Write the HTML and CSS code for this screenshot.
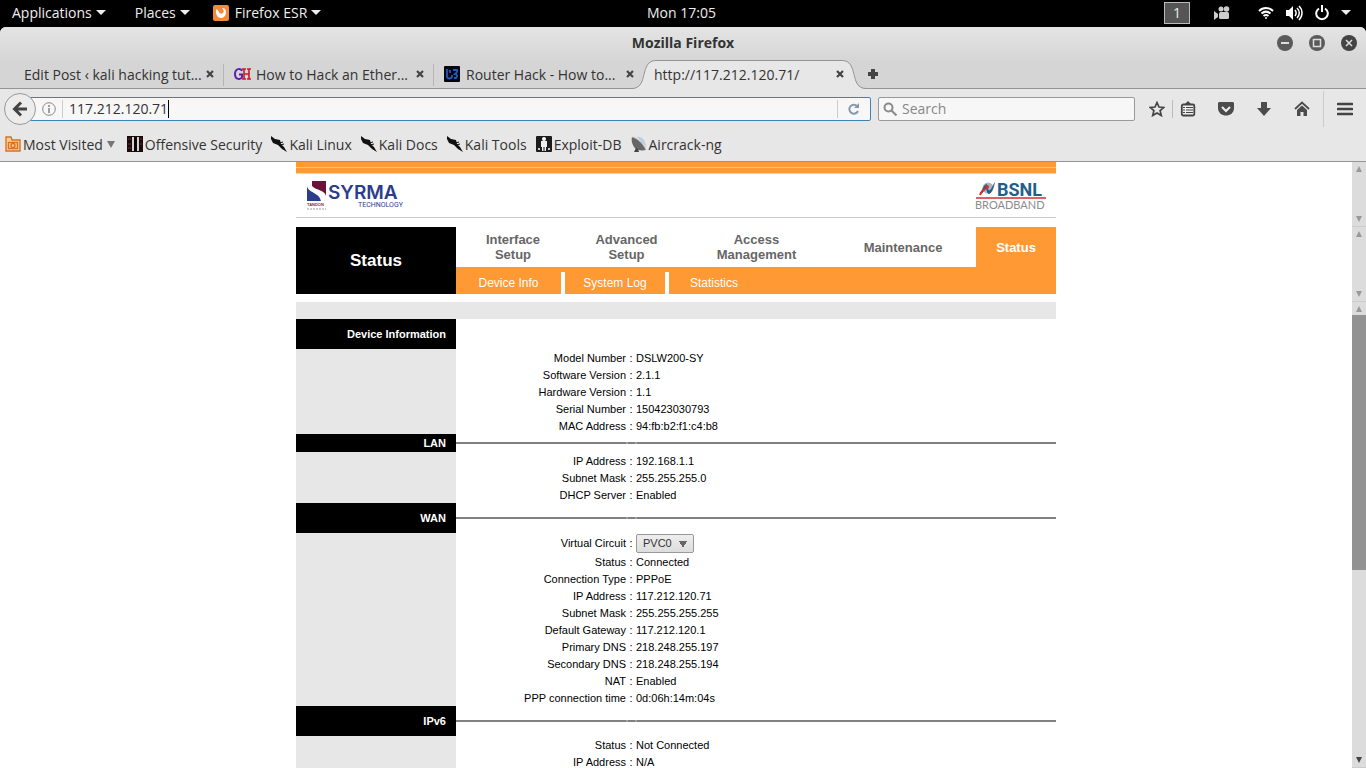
FILE: index.html
```html
<!DOCTYPE html>
<html lang="en">
<head>
    <meta charset="UTF-8">
    <title>Mozilla Firefox</title>
    <link rel="stylesheet" href="styles.css">
</head>
<body>
    <!-- desktop panel -->
    <header class="panel">
        <div class="panel-left">
            <button class="panel-item">Applications <i class="caret"></i></button>
            <button class="panel-item">Places <i class="caret"></i></button>
            <button class="panel-item">
                <svg class="fx-icon" width="16" height="16" viewBox="0 0 16 16"><rect width="16" height="16" rx="2" fill="#f08a3c"/><path d="M3.500 4C2 8 4 13 8 13s6.500-5 4-9c-1-1-2-1-3-.500 1.500 1 2 2.500 1.500 4C9 9 7 9 6 7.500 5.500 6 5 5 3.500 4z" fill="#fff"/></svg>
                Firefox ESR <i class="caret"></i>
            </button>
        </div>
        <button class="panel-item clock">Mon 17:05</button>
        <div class="panel-right">
            <button class="workspace">1</button>
            <svg class="cam" width="16" height="14" viewBox="0 0 16 14" fill="#ccc"><circle cx="7" cy="3" r="2.500"/><circle cx="12.500" cy="3" r="2.800"/><rect x="5" y="6" width="10" height="7" rx="1.500"/><path d="M0 5l4 3v3l-4 3z"/></svg>
            <svg width="16" height="14" viewBox="0 0 16 14" fill="none" stroke="#fff" stroke-width="2"><path d="M1 5c4-4 10-4 14 0"/><path d="M3.500 7.500c3-2.500 6-2.500 9 0"/><path d="M5.500 10c2-1.500 3-1.500 5 0"/><circle cx="8" cy="12" r="1" fill="#fff" stroke="none"/></svg>
            <svg width="17" height="16" viewBox="0 0 17 16" fill="none" stroke="#fff"><path d="M0 5h3l4-4v14l-4-4H0z" fill="#fff" stroke="none"/><path d="M9 5c1.500 2 1.500 4 0 6M11 3c3 3 3 7 0 10M13 1c4 4 4 10 0 14" stroke-width="1.500"/></svg>
            <svg width="14" height="16" viewBox="0 0 14 16" fill="none" stroke="#fff" stroke-width="2"><path d="M4 3.500a5.800 5.800 0 1 0 6 0M7 0v7"/></svg>
            <i class="caret"></i>
        </div>
    </header>

    <div class="window">
        <div class="titlebar">
            <div class="title">Mozilla Firefox</div>
            <div class="win-buttons">
                <button aria-label="Minimize"><svg width="16" height="16" viewBox="0 0 16 16"><circle cx="8" cy="8" r="8" fill="#5a5a5a"/><path d="M4 8h8" stroke="#ddd" stroke-width="2"/></svg></button>
                <button aria-label="Maximize"><svg width="16" height="16" viewBox="0 0 16 16"><circle cx="8" cy="8" r="8" fill="#5a5a5a"/><rect x="4.500" y="4.500" width="7" height="7" fill="none" stroke="#ddd" stroke-width="1.500"/></svg></button>
                <button aria-label="Close"><svg width="16" height="16" viewBox="0 0 16 16"><circle cx="8" cy="8" r="8" fill="#444"/><path d="M5 5l6 6M11 5l-6 6" stroke="#ddd" stroke-width="1.500"/></svg></button>
            </div>
        </div>

        <div class="tabs">
            <div class="tab">
                <button class="tab-label">Edit Post ‹ kali hacking tut...</button>
                <button class="tab-close" aria-label="Close tab"><svg width="8" height="8" viewBox="0 0 8 8"><path d="M1 1l6 6M7 1L1 7" stroke="#444" stroke-width="2.200"/></svg></button>
            </div>
            <div class="tab">
                <svg width="17" height="16" viewBox="0 0 17 16" fill="none" stroke-width="2"><path d="M8 5C7 2 1 2 1 8s6 6 7 3V8.500H5" stroke="#5a20b0"/><path d="M10 3v10M15 3v10M10 8h5M8 3h4M13 3h4M8 13h4M13 13h4" stroke="#d01828" stroke-width="1.600"/></svg>
                <button class="tab-label">How to Hack an Ether...</button>
                <button class="tab-close" aria-label="Close tab"><svg width="8" height="8" viewBox="0 0 8 8"><path d="M1 1l6 6M7 1L1 7" stroke="#444" stroke-width="2.200"/></svg></button>
            </div>
            <div class="tab">
                <svg width="17" height="16" viewBox="0 0 17 16"><rect width="16" height="16" rx="1" fill="#05060c"/><path d="M3 3v8c1 2 4 2 5 0V9M6 4v3M9 4h4c1 2-1 3-2 4 2 0 3 2 1 4h-2" fill="none" stroke="#1c5cc0" stroke-width="1.800"/></svg>
                <button class="tab-label">Router Hack - How to...</button>
                <button class="tab-close" aria-label="Close tab"><svg width="8" height="8" viewBox="0 0 8 8"><path d="M1 1l6 6M7 1L1 7" stroke="#444" stroke-width="2.200"/></svg></button>
            </div>
            <div class="tab active">
                <svg class="edge edge-left" width="24" height="29" viewBox="0 0 24 29"><path d="M0 28.500C17 28.500 7 .5 24 .5V29H0z" fill="#e7e7e7"/><path d="M0 28.500C17 28.500 7 .5 24 .5" fill="none" stroke="#949494"/></svg>
                <svg class="edge edge-right" width="24" height="29" viewBox="0 0 24 29"><path d="M24 28.500C7 28.500 17 .5 0 .5V29h24z" fill="#e7e7e7"/><path d="M24 28.500C7 28.500 17 .5 0 .5" fill="none" stroke="#949494"/></svg>
                <button class="tab-label">http://117.212.120.71/</button>
                <button class="tab-close" aria-label="Close tab"><svg width="8" height="8" viewBox="0 0 8 8"><path d="M1 1l6 6M7 1L1 7" stroke="#444" stroke-width="2.200"/></svg></button>
            </div>
            <button class="new-tab" aria-label="New tab"><svg width="10" height="10" viewBox="0 0 10 10"><path d="M5 0v10M0 5h10" stroke="#444" stroke-width="4"/></svg></button>
        </div>

        <div class="navbar">
            <button class="back" aria-label="Back"><svg width="16" height="16" viewBox="0 0 16 16" fill="none" stroke="#444" stroke-width="3"><path d="M9 1.500L2.500 8 9 14.500M3 8h12"/></svg></button>
            <div class="urlbar">
                <svg width="14" height="14" viewBox="0 0 14 14" fill="none" stroke="#888"><circle cx="7" cy="7" r="6.300"/><path d="M7 6v5M7 3v2" stroke-width="1.600"/></svg>
                <input class="url" type="text" aria-label="Address" value="117.212.120.71">
                <i class="text-cursor"></i>
                <button class="reload" aria-label="Reload"><svg width="12" height="12" viewBox="0 0 12 12" fill="none" stroke="#8599a8" stroke-width="2"><path d="M9.500 3.500A4.500 4.500 0 1 0 10 8"/><path d="M11 0v5H6z" fill="#8599a8" stroke="none"/></svg></button>
            </div>
            <div class="searchbar">
                <svg width="14" height="14" viewBox="0 0 14 14" fill="none" stroke="#8a8a8a" stroke-width="2"><circle cx="5.500" cy="5.500" r="4"/><path d="M8.500 8.500l5 5"/></svg>
                <input type="text" aria-label="Search" placeholder="Search">
            </div>
            <div class="tools">
                <button aria-label="Bookmark"><svg width="16" height="16" viewBox="0 0 16 16"><path d="M8 1.500l2 4.500 4.800.4-3.700 3.200 1.200 4.900L8 12l-4.300 2.500 1.200-4.900L1.200 6.400 6 6z" fill="none" stroke="#444" stroke-width="1.700"/></svg></button>
                <i class="divider"></i>
                <button aria-label="Bookmarks list"><svg width="16" height="16" viewBox="0 0 16 16"><path d="M5 3l3-3 3 3" fill="#444"/><rect x="1.800" y="3.500" width="12.500" height="11" rx="1.500" fill="#eee" stroke="#444" stroke-width="1.800"/><path d="M3 6.500h2M6 6.500h7M3 9h2M6 9h7M3 11.500h2M6 11.500h7" stroke="#444" stroke-width="1.200"/></svg></button>
                <button aria-label="Pocket"><svg width="16" height="16" viewBox="0 0 16 16"><path d="M1 1h14l1 1v5c0 10-16 10-16 0V2z" fill="#4c4c4c"/><path d="M4 6l4 4 4-4" fill="none" stroke="#eee" stroke-width="2"/></svg></button>
                <button aria-label="Downloads"><svg width="16" height="16" viewBox="0 0 16 16"><path d="M5 1h6v6h4l-7 8-7-8h4z" fill="#4c4c4c"/></svg></button>
                <button aria-label="Home"><svg width="16" height="16" viewBox="0 0 16 16"><path d="M1 8l7-6.500L15 8" fill="none" stroke="#4c4c4c" stroke-width="1.800"/><path d="M8 4.500l5 4.500v6H9.500v-4h-3v4H3V9z" fill="#4c4c4c"/></svg></button>
                <i class="divider long"></i>
                <button aria-label="Menu"><svg width="16" height="16" viewBox="0 0 16 16"><path d="M1 3h14M1 8h14M1 13h14" stroke="#444" stroke-width="2.600" stroke-linecap="round"/></svg></button>
            </div>
        </div>

        <nav class="bookmarks">
            <a href="#"><svg width="16" height="16" viewBox="0 0 16 16" fill="none" stroke="#d87420" stroke-width="1.400"><path d="M1 15V1h5l1 3h8v11z" fill="#f8cf9c"/><rect x="3.500" y="6.500" width="9" height="6"/><circle cx="8" cy="9.500" r="2"/></svg>Most Visited<i class="small-caret"></i></a>
            <a href="#"><svg width="16" height="16" viewBox="0 0 16 16"><rect width="16" height="16" fill="#1a0c0c"/><path d="M5 1h2v14H5zM10 1h2v14h-2z" fill="#d8d0d0"/><path d="M7.500 4l1-2 1 2v11h-2z" fill="#000"/><path d="M1 3h3M1 8h3M13 3h2M13 8h2M1 12h3" stroke="#6a3030"/></svg>Offensive Security</a>
            <a href="#"><svg width="16" height="16" viewBox="0 0 16 16"><path d="M0 0l4 3 5 1 1 4 3 3 3 5-5-3-4-4-5-2-2-4z" fill="#111"/><path d="M8 7l4-1M9 9l4-1" stroke="#111"/></svg>Kali Linux</a>
            <a href="#"><svg width="16" height="16" viewBox="0 0 16 16"><path d="M0 0l4 3 5 1 1 4 3 3 3 5-5-3-4-4-5-2-2-4z" fill="#111"/><path d="M8 7l4-1M9 9l4-1" stroke="#111"/></svg>Kali Docs</a>
            <a href="#"><svg width="16" height="16" viewBox="0 0 16 16"><path d="M0 0l4 3 5 1 1 4 3 3 3 5-5-3-4-4-5-2-2-4z" fill="#111"/><path d="M8 7l4-1M9 9l4-1" stroke="#111"/></svg>Kali Tools</a>
            <a href="#"><svg width="16" height="16" viewBox="0 0 16 16"><rect width="16" height="16" rx="1" fill="#1c1c1c"/><circle cx="8" cy="3" r="2" fill="#fff"/><path d="M5 5h6v6h-1v4H8.500v-4h-1v4H6v-4H5z" fill="#eee"/><path d="M2 13h2M12 13h2" stroke="#ccc" stroke-width="2"/></svg>Exploit-DB</a>
            <a href="#"><svg width="16" height="16" viewBox="0 0 16 16"><path d="M6 1c5-1 9 4 9 10" fill="#b9cfe6"/><path d="M1 1c5 1 11 6 14 13-5 1-10 0-12-3S0 4 1 1z" fill="#666"/><path d="M1 1c5 1 11 6 14 13" fill="none" stroke="#bbb"/><path d="M5 12l-2 4h5l-1-3z" fill="#444"/></svg>Aircrack-ng</a>
        </nav>
    </div>

    <!-- router pages, one block per frame -->
    <div class="frame frame-logo">
        <div class="frame-body">
            <div class="page">
                <div class="stripes"></div>
                <div class="logos">
                    <svg width="98" height="32" viewBox="0 0 98 32">
                        <path d="M7 1h14v15c-1-6-11-6-14-10z" fill="#6a1238"/>
                        <path d="M2 6c1 7 12 6 14 15H2z" fill="#2c3c8e"/>
                        <text x="23" y="19" class="syrma">SYRMA</text>
                        <text x="53" y="27" class="technology">TECHNOLOGY</text>
                        <text x="2" y="26" class="tandon">TANDON</text>
                        <path d="M2 29h19" stroke="#99a" stroke-width="1" stroke-dasharray="2 1"/>
                    </svg>
                    <svg width="72" height="32" viewBox="0 0 72 32">
                        <circle cx="13" cy="8" r="5.500" fill="#aab4bc"/>
                        <path d="M6 14c1-6 4-10 6-10 0 4 1 7 3 6s3-6 5-8c-1 6-4 12-6 12s-2-4-3-5c-2 1-3 4-5 5z" fill="#1f5f8c"/>
                        <path d="M5 15c1-3 3-5 5-6" fill="none" stroke="#d03030" stroke-width="2"/><circle cx="12" cy="7" r="2" fill="#d03030"/>
                        <text x="22" y="16" class="bsnl">BSNL</text>
                        <path d="M1 18h70" stroke="#d02c30" stroke-width="1.500"/>
                        <text x="0" y="29" class="broadband">BROADBAND</text>
                    </svg>
                </div>
            </div>
        </div>
        <div class="scroll">
            <i class="arrow up"></i>
            <i class="arrow down"></i>
        </div>
    </div>

    <div class="frame frame-menu">
        <div class="frame-body">
            <div class="page menu">
                <div class="menu-title">Status</div>
                <nav class="menu-links">
                    <div class="main-menu">
                        <a href="#">Interface<br>Setup</a>
                        <a href="#">Advanced<br>Setup</a>
                        <a href="#">Access<br>Management</a>
                        <a href="#">Maintenance</a>
                        <a href="#" class="current">Status</a>
                    </div>
                    <div class="sub-menu">
                        <a href="#">Device Info</a>
                        <a href="#">System Log</a>
                        <a href="#">Statistics</a>
                    </div>
                </nav>
            </div>
        </div>
        <div class="scroll">
            <i class="arrow up"></i>
            <i class="arrow down"></i>
        </div>
    </div>

    <div class="frame frame-main">
        <div class="frame-body">
            <div class="page">
                <div class="gray-bar"></div>
                <table class="info">
                    <colgroup>
                        <col class="col-side">
                        <col class="col-name">
                        <col class="col-colon">
                        <col>
                    </colgroup>
                    <tr class="section"><th>Device Information</th><td colspan="3"></td></tr>
                    <tr><td class="side"></td><td class="name">Model Number</td><td class="colon">:</td><td>DSLW200-SY</td></tr>
                    <tr><td class="side"></td><td class="name">Software Version</td><td class="colon">:</td><td>2.1.1</td></tr>
                    <tr><td class="side"></td><td class="name">Hardware Version</td><td class="colon">:</td><td>1.1</td></tr>
                    <tr><td class="side"></td><td class="name">Serial Number</td><td class="colon">:</td><td>150423030793</td></tr>
                    <tr><td class="side"></td><td class="name">MAC Address</td><td class="colon">:</td><td>94:fb:b2:f1:c4:b8</td></tr>
                    <tr class="section short"><th>LAN</th><td colspan="3"><hr></td></tr>
                    <tr><td class="side"></td><td class="name">IP Address</td><td class="colon">:</td><td>192.168.1.1</td></tr>
                    <tr><td class="side"></td><td class="name">Subnet Mask</td><td class="colon">:</td><td>255.255.255.0</td></tr>
                    <tr><td class="side"></td><td class="name">DHCP Server</td><td class="colon">:</td><td>Enabled</td></tr>
                    <tr class="section"><th>WAN</th><td colspan="3"><hr></td></tr>
                    <tr class="circuit"><td class="side"></td><td class="name"><label for="pvc">Virtual Circuit</label></td><td class="colon">:</td><td><select id="pvc"><option>PVC0</option><option>PVC1</option><option>PVC2</option></select></td></tr>
                    <tr><td class="side"></td><td class="name">Status</td><td class="colon">:</td><td>Connected</td></tr>
                    <tr><td class="side"></td><td class="name">Connection Type</td><td class="colon">:</td><td>PPPoE</td></tr>
                    <tr><td class="side"></td><td class="name">IP Address</td><td class="colon">:</td><td>117.212.120.71</td></tr>
                    <tr><td class="side"></td><td class="name">Subnet Mask</td><td class="colon">:</td><td>255.255.255.255</td></tr>
                    <tr><td class="side"></td><td class="name">Default Gateway</td><td class="colon">:</td><td>117.212.120.1</td></tr>
                    <tr><td class="side"></td><td class="name">Primary DNS</td><td class="colon">:</td><td>218.248.255.197</td></tr>
                    <tr><td class="side"></td><td class="name">Secondary DNS</td><td class="colon">:</td><td>218.248.255.194</td></tr>
                    <tr><td class="side"></td><td class="name">NAT</td><td class="colon">:</td><td>Enabled</td></tr>
                    <tr><td class="side"></td><td class="name">PPP connection time</td><td class="colon">:</td><td>0d:06h:14m:04s</td></tr>
                    <tr class="section"><th>IPv6</th><td colspan="3"><hr></td></tr>
                    <tr><td class="side"></td><td class="name">Status</td><td class="colon">:</td><td>Not Connected</td></tr>
                    <tr><td class="side"></td><td class="name">IP Address</td><td class="colon">:</td><td>N/A</td></tr>
                </table>
            </div>
        </div>
        <div class="scroll">
            <i class="arrow up"></i>
            <div class="track"><div class="thumb"></div></div>
            <i class="arrow down dark"></i>
        </div>
    </div>
</body>
</html>
```
FILE: styles.css
```css
* {
    box-sizing: border-box;
}
body {
    margin: 0;
    height: 100vh;
    display: flex;
    flex-direction: column;
    overflow: hidden;
    background: #000;
    font-family: "Open Sans", "Noto Sans", sans-serif;
    font-size: 14px;
    color: #333;
}
button {
    padding: 0;
    border: none;
    background: none;
    font: inherit;
    color: inherit;
    white-space: nowrap;
}
input {
    min-width: 0;
    padding: 0;
    border: none;
    outline: none;
    background: none;
    font: inherit;
    color: inherit;
}
a {
    color: inherit;
    text-decoration: none;
}
svg {
    flex: none;
    display: block;
}

/* desktop panel */
.panel {
    flex: none;
    height: 27px;
    padding: 0 15px 2px 12px;
    display: grid;
    grid-template-columns: 1fr auto 1fr;
    align-items: center;
    color: #eee;
}
.panel-left,
.panel-right {
    display: flex;
    align-items: center;
}
.panel-left {
    gap: 29px;
}
.panel-right {
    justify-content: flex-end;
    gap: 12px;
}
.panel-item {
    display: flex;
    align-items: center;
    gap: 4px;
}
.fx-icon {
    margin-left: -6px;
    margin-right: 2px;
}
.caret {
    border: 5px solid transparent;
    border-top-color: #eee;
    border-bottom: none;
}
.workspace {
    width: 26px;
    height: 22px;
    margin-right: 12px;
    border: 1px solid #bbb;
    background: #555;
}
.cam {
    margin-right: 16px;
}

/* browser window */
.window {
    flex: none;
    border-radius: 6px 6px 0 0;
    border-bottom: 1px solid #949494;
    background: #e7e7e7;
    overflow: hidden;
}
.titlebar {
    height: 33px;
    padding: 0 9px 2px;
    display: grid;
    grid-template-columns: 1fr auto 1fr;
    align-items: center;
    background: linear-gradient(#e4e4e4, #d6d6d6);
}
.title {
    grid-column: 2;
    font-weight: bold;
}
.win-buttons {
    display: flex;
    justify-content: flex-end;
    gap: 16px;
}
.tabs {
    height: 29px;
    padding-left: 14px;
    display: flex;
    border-bottom: 1px solid #949494;
    background: #d5d5d5;
}
.tab {
    position: relative;
    flex: 0 1 210px;
    min-width: 0;
    height: 28px;
    padding: 0 10px;
    display: flex;
    align-items: center;
    gap: 5px;
}
.tab:nth-child(-n+2)::after {
    content: "";
    position: absolute;
    right: 0;
    top: 4px;
    bottom: 2px;
    border-right: 1px solid #b5b5b5;
}
.tab-label {
    flex: 1;
    min-width: 0;
    text-align: left;
}
.active {
    height: 29px;
    padding-bottom: 1px;
    z-index: 1;
}
.active::before {
    content: "";
    position: absolute;
    left: 12px;
    right: 12px;
    top: 0;
    bottom: 0;
    border-top: 1px solid #949494;
    background: #e7e7e7;
}
.active button {
    position: relative;
}
.edge {
    position: absolute;
    top: 0;
}
.edge-left {
    left: -12px;
}
.edge-right {
    right: -12px;
}
.new-tab {
    margin-left: 14px;
}
.navbar {
    height: 40px;
    padding: 0 13px 0 4px;
    display: flex;
    align-items: center;
}
.back {
    position: relative;
    flex: none;
    width: 32px;
    height: 32px;
    display: flex;
    align-items: center;
    justify-content: center;
    border: 1px solid #999;
    border-radius: 50%;
    background: #ececec;
}
.urlbar,
.searchbar {
    height: 24px;
    display: flex;
    align-items: center;
    border: 1px solid #999;
    border-radius: 2px;
    background: #f7f7f7;
}
.urlbar {
    flex: 1;
    margin-left: -7px;
    padding-left: 12px;
    border-color: #3b83b0;
}
.urlbar input,
.searchbar input {
    height: 18px;
    line-height: 18px;
}
.url {
    field-sizing: content;
    margin-left: 6px;
    padding-left: 6px;
    border-left: 1px solid #ccc;
}
.text-cursor {
    height: 18px;
    border-left: 1px solid #000;
}
.reload {
    width: 33px;
    height: 18px;
    margin-left: auto;
    padding-left: 10px;
    border-left: 1px solid #ccc;
}
.searchbar {
    flex: 0 1 257px;
    margin: 0 14px 0 7px;
    padding: 0 4px;
    gap: 5px;
}
.searchbar input {
    flex: 1;
}
.searchbar input::placeholder {
    color: #888;
}
.tools {
    display: flex;
    align-items: center;
    gap: 22px;
}
.divider {
    height: 18px;
    margin: 0 -15px;
    border-left: 1px solid #bbb;
}
.divider.long {
    height: 36px;
    margin: 0 -9px;
    border-color: #ccc;
}
.bookmarks {
    height: 32px;
    padding: 0 5px 2px;
    display: flex;
    align-items: center;
    gap: 9px;
}
.bookmarks a {
    display: flex;
    align-items: center;
    gap: 2px;
}
.small-caret {
    margin: 0 3px 0 2px;
    border: 4px solid transparent;
    border-top: 7px solid #777;
    border-bottom: none;
}

/* frames */
.frame {
    flex: none;
    display: flex;
    background: #fff;
    font-family: "Liberation Sans", Arial, sans-serif;
    color: #000;
}
.frame-logo {
    height: 65px;
}
.frame-menu {
    height: 75px;
}
.frame-main {
    flex: 1;
    min-height: 0;
}
.frame-body {
    flex: 1;
    overflow: hidden;
}
.page {
    max-width: 760px;
    margin: 0 auto;
}
.scroll {
    flex: none;
    width: 14px;
    padding: 4px 0;
    display: flex;
    flex-direction: column;
    align-items: center;
    justify-content: space-between;
    border-bottom: 1px solid #ccc;
    background: #dcdcdc;
}
.arrow {
    border: 3px solid transparent;
}
.up {
    border-top: none;
    border-bottom: 6px solid #999;
}
.down {
    border-bottom: none;
    border-top: 6px solid #999;
}
.dark {
    border-top-color: #444;
}
.track {
    flex: 1;
    width: 100%;
    padding: 3px 0;
}
.thumb {
    height: 58%;
    background: #929292;
}

/* logo frame */
.stripes {
    height: 12px;
    border-bottom: 1px solid #ffcf9c;
    background: linear-gradient(#ff9933 5px, #eec59a 5px, #eec59a 6px, #ff9933 6px);
}
.logos {
    height: 44px;
    padding: 0 9px;
    display: flex;
    justify-content: space-between;
    align-items: center;
    border-bottom: 1px solid #ccc;
}
.syrma {
    font: 600 19px Inter, sans-serif;
    fill: #2c3c8e;
}
.technology {
    font: 7px Roboto, sans-serif;
    fill: #2c3c8e;
}
.tandon {
    font: bold 4px "Liberation Sans", sans-serif;
    fill: #8a2848;
}
.bsnl {
    font: bold 18px Roboto, sans-serif;
    fill: #1f5f8c;
}
.broadband {
    font: 11px Lato, sans-serif;
    fill: #8c8c8c;
}

/* menu frame */
.menu {
    display: flex;
}
.menu-title {
    width: 160px;
    height: 67px;
    line-height: 67px;
    background: #000;
    color: #fff;
    font-size: 17px;
    font-weight: bold;
    text-align: center;
}
.menu-links {
    flex: 1;
}
.main-menu {
    height: 40px;
    display: grid;
    grid-template-columns: 114fr 113fr 147fr 146fr 80fr;
    font-size: 13px;
    font-weight: bold;
    line-height: 15px;
    text-align: center;
    color: #666;
}
.main-menu a {
    display: flex;
    align-items: center;
    justify-content: center;
}
.main-menu .current {
    background: #ff9933;
    color: #fff;
}
.sub-menu {
    height: 27px;
    padding-top: 5px;
    display: flex;
    background: #ff9933;
    color: #fff;
    font-size: 12px;
    line-height: 22px;
    text-align: center;
}
.sub-menu a {
    width: 104px;
    border-right: 4px solid #fff;
}
.sub-menu a:first-child {
    width: 109px;
}
.sub-menu a:last-child {
    width: 90px;
    border: none;
}

/* status frame */
.gray-bar {
    height: 17px;
    background: #e7e7e7;
}
.info {
    width: 100%;
    table-layout: fixed;
    border-collapse: collapse;
    font-size: 11px;
    line-height: 15px;
}
.col-side {
    width: 160px;
}
.col-name {
    width: 170px;
}
.col-colon {
    width: 10px;
}
.info td {
    padding: 2px 0 0;
}
.info th {
    padding: 0 10px 0 0;
    background: #000;
    color: #fff;
    text-align: right;
}
.info .section {
    height: 30px;
}
.info .short {
    height: 18px;
}
.info .section td {
    padding: 0;
}
.info .side {
    background: #e7e7e7;
}
.info .name {
    text-align: right;
}
.info .colon {
    text-align: center;
}
.info hr {
    height: 2px;
    margin: 0;
    border: none;
    background: linear-gradient(90deg, #808080 170px, #a0a0a0 170px, #a0a0a0 172px, #808080 172px, #808080 179px, #a0a0a0 179px, #a0a0a0 181px, #808080 181px);
}
.info .circuit {
    height: 20px;
}
.info .circuit td {
    padding: 0;
}
.info select {
    display: block;
    width: 58px;
    height: 19px;
    padding: 0 6px;
    appearance: none;
    border: 1px solid #999;
    border-radius: 2px;
    background: conic-gradient(from -30deg at 50% 100%, #666 60deg, transparent 0) 42px 6px / 8px 7px no-repeat, linear-gradient(#eee, #ddd);
    color: #333;
    font: inherit;
}
```
